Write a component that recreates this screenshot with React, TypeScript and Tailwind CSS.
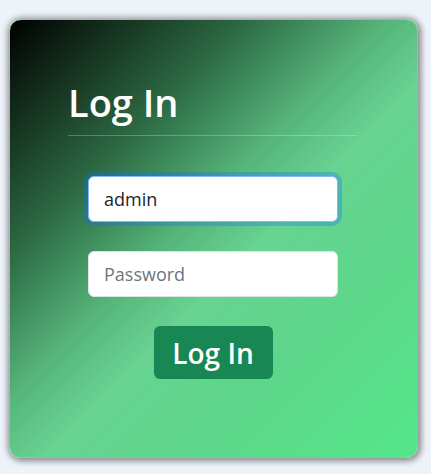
import { useState } from 'react';

export default function App() {
  const [user, setUser] = useState('admin');
  const [pass, setPass] = useState('');

  return (
    <div className="min-h-[474px] w-full bg-[#eef2f9] pt-[19px] pl-[9px] font-['Open_Sans',sans-serif]">
      <div className="w-[409px] h-[439px] rounded-[12px] border border-[#5ee08f] shadow-[1px_1px_6px_2px_rgba(0,0,0,0.45)] bg-[linear-gradient(135deg,#000000_0%,#2c6a43_28%,#56b57a_45%,#68d392_56%,#5dd68b_72%,#55e68a_100%)] px-[58px] pt-[59px]">
        <h1 className="text-[38px] leading-[46px] font-semibold text-white">Log In</h1>
        <div className="mt-[10px] h-px w-[289px] bg-white/25" />

        <form className="ml-[20px] mt-[40px] w-[250px] flex flex-col items-center" onSubmit={e => e.preventDefault()}>
          <input
            value={user}
            onChange={e => setUser(e.target.value)}
            className="w-full h-[46px] rounded-[6px] bg-white border border-[#86b7fe] px-[15px] text-[18px] text-[#212529] outline-none ring-4 ring-[#0d6efd]/30"
          />
          <input
            type="password"
            value={pass}
            onChange={e => setPass(e.target.value)}
            placeholder="Password"
            className="mt-[29px] w-full h-[46px] rounded-[6px] bg-white border border-[#dee2e6] px-[15px] text-[18px] text-[#212529] placeholder:text-[#6c757d] outline-none"
          />
          <button
            type="submit"
            className="mt-[29px] w-[119px] h-[53px] rounded-[6px] bg-[#198754] text-white text-[28px] font-semibold leading-none"
          >
            Log In
          </button>
        </form>
      </div>
    </div>
  );
}
